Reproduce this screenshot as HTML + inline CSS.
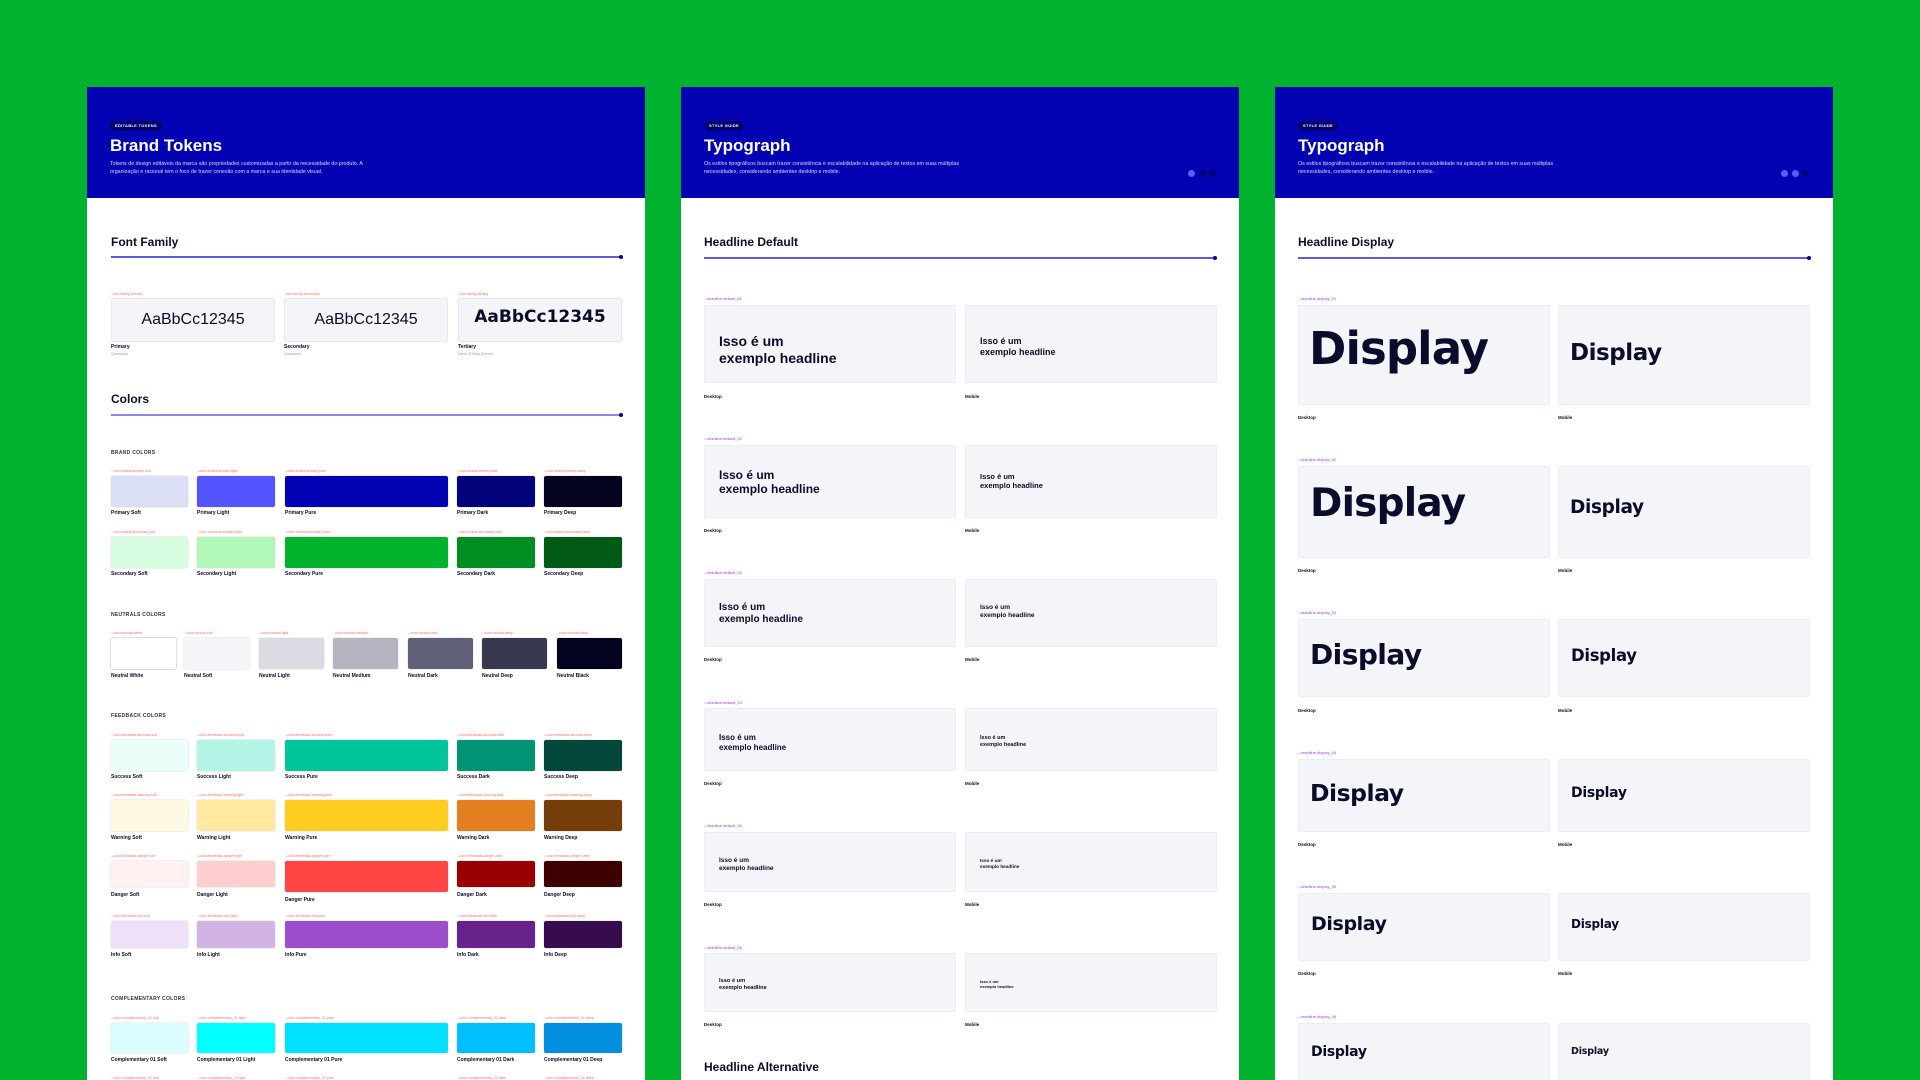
<!DOCTYPE html>
<html><head><meta charset="utf-8"><style>
*{margin:0;padding:0;box-sizing:border-box}
body{width:1920px;height:1080px;background:#00b22d;overflow:hidden;font-family:"Liberation Sans",sans-serif;color:#0b0b2b;position:relative}
.p{position:absolute;top:87px;width:558px;height:993px;background:#fff;overflow:hidden}
.p *{position:absolute;white-space:nowrap}
.hd{left:0;top:0;width:558px;height:111px;background:#0303b3}
.tag{left:23px;top:34px;height:10px;padding:0 5px;border-radius:5px;background:#00006e;color:#fff;font-size:4px;line-height:10px;font-weight:bold;letter-spacing:.3px}
.tt{left:23px;top:49px;color:#fff;font-size:17px;font-weight:bold}
.ds{left:23px;top:73px;color:#d8d8ff;font-size:5.3px;line-height:8px;white-space:normal!important;width:262px}
.h2{left:24px;font-size:12px;font-weight:bold}
.ln{left:24px;width:511px;height:1.5px;background:#5a5ae0}
.ln::after{content:"";position:absolute;right:-1px;top:-1.5px;width:4px;height:4px;border-radius:50%;background:#0000a0}
.sec{left:24px;font-size:5px;font-weight:bold;letter-spacing:.3px;color:#333}
.tk{font-size:3.5px;color:#ff6b6b}
.nm{font-size:5px;font-weight:bold}
.sw{border-radius:2px;height:31px;box-shadow:0 0 0 1px rgba(0,0,0,.06)}
.fc{top:211px;width:164px;height:44px;background:#f4f5f9;border:1px solid #e8e9ef;border-radius:2px;font-size:16px;text-align:center;line-height:42px}
.tp{font-size:4px;color:#a040e0}
.cd{background:#f4f5f9;border:1px solid #ecedf2;border-radius:2px;width:252px}
.lb{font-size:4.5px;font-weight:bold}
.dot{top:83px;width:7px;height:7px;border-radius:50%}
.hl{font-weight:bold;line-height:1.2}
.dp{font-weight:bold;font-family:"DejaVu Sans","Liberation Sans",sans-serif;letter-spacing:-.02em}
</style></head><body>

<!-- PANEL 1 -->
<div class="p" style="left:87px">
<div class="hd"></div>
<div class="tag">EDITABLE TOKENS</div>
<div class="tt">Brand Tokens</div>
<div class="ds">Tokens de design editáveis da marca são propriedades customizadas a partir da necessidade do produto. A organização e racional tem o foco de trazer conexão com a marca e sua identidade visual.</div>
<div class="h2" style="top:148px">Font Family</div>
<div class="ln" style="top:169px"></div>
<div class="tk" style="left:24px;top:205px">--font-family-primary</div>
<div class="tk" style="left:197px;top:205px">--font-family-secondary</div>
<div class="tk" style="left:371px;top:205px">--font-family-tertiary</div>
<div class="fc" style="left:24px">AaBbCc12345</div>
<div class="fc" style="left:197px">AaBbCc12345</div>
<div class="fc" style="left:371px;font-weight:bold;font-size:17px;line-height:36px;font-family:'DejaVu Sans',sans-serif">AaBbCc12345</div>
<div class="nm" style="left:24px;top:257px">Primary</div><div class="tk" style="left:24px;top:265px;color:#999">Quicksand</div>
<div class="nm" style="left:197px;top:257px">Secondary</div><div class="tk" style="left:197px;top:265px;color:#999">Quicksand</div>
<div class="nm" style="left:371px;top:257px">Tertiary</div><div class="tk" style="left:371px;top:265px;color:#999">Hand Of Sean (Demo)</div>
<div class="h2" style="top:305px">Colors</div>
<div class="ln" style="top:327px;background:#8a8ae0"></div>

<div class="sec" style="top:363px">BRAND COLORS</div>
<div class="tk" style="left:24px;top:382px">--color-brand-primary-soft</div>
<div class="tk" style="left:110px;top:382px">--color-brand-primary-light</div>
<div class="tk" style="left:198px;top:382px">--color-brand-primary-pure</div>
<div class="tk" style="left:370px;top:382px">--color-brand-primary-dark</div>
<div class="tk" style="left:457px;top:382px">--color-brand-primary-deep</div>
<div class="sw" style="left:24px;top:389px;width:77px;background:#dadff5"></div>
<div class="sw" style="left:110px;top:389px;width:78px;background:#5454ff"></div>
<div class="sw" style="left:198px;top:389px;width:163px;background:#0303b3"></div>
<div class="sw" style="left:370px;top:389px;width:78px;background:#02027a"></div>
<div class="sw" style="left:457px;top:389px;width:78px;background:#03031f"></div>
<div class="nm" style="left:24px;top:423px">Primary Soft</div>
<div class="nm" style="left:110px;top:423px">Primary Light</div>
<div class="nm" style="left:198px;top:423px">Primary Pure</div>
<div class="nm" style="left:370px;top:423px">Primary Dark</div>
<div class="nm" style="left:457px;top:423px">Primary Deep</div>

<div class="tk" style="left:24px;top:443px">--color-brand-secondary-soft</div>
<div class="tk" style="left:110px;top:443px">--color-brand-secondary-light</div>
<div class="tk" style="left:198px;top:443px">--color-brand-secondary-pure</div>
<div class="tk" style="left:370px;top:443px">--color-brand-secondary-dark</div>
<div class="tk" style="left:457px;top:443px">--color-brand-secondary-deep</div>
<div class="sw" style="left:24px;top:450px;width:77px;background:#d8fde0"></div>
<div class="sw" style="left:110px;top:450px;width:78px;background:#b0f7b8"></div>
<div class="sw" style="left:198px;top:450px;width:163px;background:#01b22c"></div>
<div class="sw" style="left:370px;top:450px;width:78px;background:#018d22"></div>
<div class="sw" style="left:457px;top:450px;width:78px;background:#025a17"></div>
<div class="nm" style="left:24px;top:484px">Secondary Soft</div>
<div class="nm" style="left:110px;top:484px">Secondary Light</div>
<div class="nm" style="left:198px;top:484px">Secondary Pure</div>
<div class="nm" style="left:370px;top:484px">Secondary Dark</div>
<div class="nm" style="left:457px;top:484px">Secondary Deep</div>

<div class="sec" style="top:525px">NEUTRALS COLORS</div>
<div class="tk" style="left:24px;top:544px">--color-neutral-white</div>
<div class="tk" style="left:97px;top:544px">--color-neutral-soft</div>
<div class="tk" style="left:172px;top:544px">--color-neutral-light</div>
<div class="tk" style="left:246px;top:544px">--color-neutral-medium</div>
<div class="tk" style="left:321px;top:544px">--color-neutral-dark</div>
<div class="tk" style="left:395px;top:544px">--color-neutral-deep</div>
<div class="tk" style="left:470px;top:544px">--color-neutral-black</div>
<div class="sw" style="left:24px;top:551px;width:65px;background:#fff;box-shadow:0 0 0 1px #ddd"></div>
<div class="sw" style="left:97px;top:551px;width:65px;background:#f4f5f9"></div>
<div class="sw" style="left:172px;top:551px;width:65px;background:#dadbe3"></div>
<div class="sw" style="left:246px;top:551px;width:65px;background:#b4b5c0"></div>
<div class="sw" style="left:321px;top:551px;width:65px;background:#5f6075"></div>
<div class="sw" style="left:395px;top:551px;width:65px;background:#38384f"></div>
<div class="sw" style="left:470px;top:551px;width:65px;background:#03031f"></div>
<div class="nm" style="left:24px;top:586px">Neutral White</div>
<div class="nm" style="left:97px;top:586px">Neutral Soft</div>
<div class="nm" style="left:172px;top:586px">Neutral Light</div>
<div class="nm" style="left:246px;top:586px">Neutral Medium</div>
<div class="nm" style="left:321px;top:586px">Neutral Dark</div>
<div class="nm" style="left:395px;top:586px">Neutral Deep</div>
<div class="nm" style="left:470px;top:586px">Neutral Black</div>

<div class="sec" style="top:626px">FEEDBACK COLORS</div>
<div class="tk" style="left:24px;top:646px">--color-feedback-success-soft</div>
<div class="tk" style="left:110px;top:646px">--color-feedback-success-light</div>
<div class="tk" style="left:198px;top:646px">--color-feedback-success-pure</div>
<div class="tk" style="left:370px;top:646px">--color-feedback-success-dark</div>
<div class="tk" style="left:457px;top:646px">--color-feedback-success-deep</div>
<div class="sw" style="left:24px;top:653px;width:77px;background:#ebfffa"></div>
<div class="sw" style="left:110px;top:653px;width:78px;background:#b3f4e6"></div>
<div class="sw" style="left:198px;top:653px;width:163px;background:#00c59b"></div>
<div class="sw" style="left:370px;top:653px;width:78px;background:#009474"></div>
<div class="sw" style="left:457px;top:653px;width:78px;background:#02473a"></div>
<div class="nm" style="left:24px;top:687px">Success Soft</div>
<div class="nm" style="left:110px;top:687px">Success Light</div>
<div class="nm" style="left:198px;top:687px">Success Pure</div>
<div class="nm" style="left:370px;top:687px">Success Dark</div>
<div class="nm" style="left:457px;top:687px">Success Deep</div>

<div class="tk" style="left:24px;top:706px">--color-feedback-warning-soft</div>
<div class="tk" style="left:110px;top:706px">--color-feedback-warning-light</div>
<div class="tk" style="left:198px;top:706px">--color-feedback-warning-pure</div>
<div class="tk" style="left:370px;top:706px">--color-feedback-warning-dark</div>
<div class="tk" style="left:457px;top:706px">--color-feedback-warning-deep</div>
<div class="sw" style="left:24px;top:713px;width:77px;background:#fff8e2"></div>
<div class="sw" style="left:110px;top:713px;width:78px;background:#ffe8a0"></div>
<div class="sw" style="left:198px;top:713px;width:163px;background:#ffcc22"></div>
<div class="sw" style="left:370px;top:713px;width:78px;background:#e37f1f"></div>
<div class="sw" style="left:457px;top:713px;width:78px;background:#743d0a"></div>
<div class="nm" style="left:24px;top:748px">Warning Soft</div>
<div class="nm" style="left:110px;top:748px">Warning Light</div>
<div class="nm" style="left:198px;top:748px">Warning Pure</div>
<div class="nm" style="left:370px;top:748px">Warning Dark</div>
<div class="nm" style="left:457px;top:748px">Warning Deep</div>

<div class="tk" style="left:24px;top:767px">--color-feedback-danger-soft</div>
<div class="tk" style="left:110px;top:767px">--color-feedback-danger-light</div>
<div class="tk" style="left:198px;top:767px">--color-feedback-danger-pure</div>
<div class="tk" style="left:370px;top:767px">--color-feedback-danger-dark</div>
<div class="tk" style="left:457px;top:767px">--color-feedback-danger-deep</div>
<div class="sw" style="left:24px;top:774px;width:77px;height:26px;background:#fff1f1"></div>
<div class="sw" style="left:110px;top:774px;width:78px;height:26px;background:#ffcfcf"></div>
<div class="sw" style="left:198px;top:774px;width:163px;height:31px;background:#ff4444"></div>
<div class="sw" style="left:370px;top:774px;width:78px;height:26px;background:#9a0003"></div>
<div class="sw" style="left:457px;top:774px;width:78px;height:26px;background:#3e0000"></div>
<div class="nm" style="left:24px;top:805px">Danger Soft</div>
<div class="nm" style="left:110px;top:805px">Danger Light</div>
<div class="nm" style="left:198px;top:810px">Danger Pure</div>
<div class="nm" style="left:370px;top:805px">Danger Dark</div>
<div class="nm" style="left:457px;top:805px">Danger Deep</div>

<div class="tk" style="left:24px;top:827px">--color-feedback-info-soft</div>
<div class="tk" style="left:110px;top:827px">--color-feedback-info-light</div>
<div class="tk" style="left:198px;top:827px">--color-feedback-info-pure</div>
<div class="tk" style="left:370px;top:827px">--color-feedback-info-dark</div>
<div class="tk" style="left:457px;top:827px">--color-feedback-info-deep</div>
<div class="sw" style="left:24px;top:834px;width:77px;height:27px;background:#eee0f8"></div>
<div class="sw" style="left:110px;top:834px;width:78px;height:27px;background:#d3b2e6"></div>
<div class="sw" style="left:198px;top:834px;width:163px;height:27px;background:#9b4dcb"></div>
<div class="sw" style="left:370px;top:834px;width:78px;height:27px;background:#67228c"></div>
<div class="sw" style="left:457px;top:834px;width:78px;height:27px;background:#370b4e"></div>
<div class="nm" style="left:24px;top:865px">Info Soft</div>
<div class="nm" style="left:110px;top:865px">Info Light</div>
<div class="nm" style="left:198px;top:865px">Info Pure</div>
<div class="nm" style="left:370px;top:865px">Info Dark</div>
<div class="nm" style="left:457px;top:865px">Info Deep</div>

<div class="sec" style="top:909px">COMPLEMENTARY COLORS</div>
<div class="tk" style="left:24px;top:929px">--color-complementary_01-soft</div>
<div class="tk" style="left:110px;top:929px">--color-complementary_01-light</div>
<div class="tk" style="left:198px;top:929px">--color-complementary_01-pure</div>
<div class="tk" style="left:370px;top:929px">--color-complementary_01-dark</div>
<div class="tk" style="left:457px;top:929px">--color-complementary_01-deep</div>
<div class="sw" style="left:24px;top:936px;width:77px;height:30px;background:#dcfdfd"></div>
<div class="sw" style="left:110px;top:936px;width:78px;height:30px;background:#00ffff"></div>
<div class="sw" style="left:198px;top:936px;width:163px;height:30px;background:#00e1ff"></div>
<div class="sw" style="left:370px;top:936px;width:78px;height:30px;background:#00bfff"></div>
<div class="sw" style="left:457px;top:936px;width:78px;height:30px;background:#008fde"></div>
<div class="nm" style="left:24px;top:970px">Complementary 01 Soft</div>
<div class="nm" style="left:110px;top:970px">Complementary 01 Light</div>
<div class="nm" style="left:198px;top:970px">Complementary 01 Pure</div>
<div class="nm" style="left:370px;top:970px">Complementary 01 Dark</div>
<div class="nm" style="left:457px;top:970px">Complementary 01 Deep</div>
<div class="tk" style="left:24px;top:989px">--color-complementary_02-soft</div>
<div class="tk" style="left:110px;top:989px">--color-complementary_02-light</div>
<div class="tk" style="left:198px;top:989px">--color-complementary_02-pure</div>
<div class="tk" style="left:370px;top:989px">--color-complementary_02-dark</div>
<div class="tk" style="left:457px;top:989px">--color-complementary_02-deep</div>
</div>

<!-- PANEL 2 -->
<div class="p" style="left:681px">
<div class="hd"></div>
<div class="tag">STYLE GUIDE</div>
<div class="tt">Typograph</div>
<div class="ds">Os estilos tipográficos buscam trazer consistência e escalabilidade na aplicação de textos em suas múltiplas necessidades, considerando ambientes desktop e mobile.</div>
<div class="dot" style="left:507px;background:#5a5aff"></div>
<div class="dot" style="left:518px;background:#00007a"></div>
<div class="dot" style="left:528px;background:#00007a"></div>
<div class="h2" style="top:148px;left:23px">Headline Default</div>
<div class="ln" style="top:170px;width:512px;left:23px"></div>

<div class="tp" style="left:23px;top:209px">--headline-default_01</div>
<div class="cd hl" style="left:23px;top:218px;height:78px;padding:27px 0 0 14px;font-size:14px">Isso é um<br>exemplo headline</div>
<div class="cd hl" style="left:284px;top:218px;height:78px;padding:30px 0 0 14px;font-size:9px">Isso é um<br>exemplo headline</div>
<div class="lb" style="left:23px;top:307px">Desktop</div><div class="lb" style="left:284px;top:307px">Mobile</div>

<div class="tp" style="left:23px;top:349px">--headline-default_02</div>
<div class="cd hl" style="left:23px;top:358px;height:73px;padding:22px 0 0 14px;font-size:12px">Isso é um<br>exemplo headline</div>
<div class="cd hl" style="left:284px;top:358px;height:73px;padding:26px 0 0 14px;font-size:7.5px">Isso é um<br>exemplo headline</div>
<div class="lb" style="left:23px;top:441px">Desktop</div><div class="lb" style="left:284px;top:441px">Mobile</div>

<div class="tp" style="left:23px;top:483px">--headline-default_03</div>
<div class="cd hl" style="left:23px;top:492px;height:68px;padding:22px 0 0 14px;font-size:10px">Isso é um<br>exemplo headline</div>
<div class="cd hl" style="left:284px;top:492px;height:68px;padding:24px 0 0 14px;font-size:6.5px">Isso é um<br>exemplo headline</div>
<div class="lb" style="left:23px;top:570px">Desktop</div><div class="lb" style="left:284px;top:570px">Mobile</div>

<div class="tp" style="left:23px;top:613px">--headline-default_04</div>
<div class="cd hl" style="left:23px;top:621px;height:63px;padding:24px 0 0 14px;font-size:8px">Isso é um<br>exemplo headline</div>
<div class="cd hl" style="left:284px;top:621px;height:63px;padding:26px 0 0 14px;font-size:5.5px">Isso é um<br>exemplo headline</div>
<div class="lb" style="left:23px;top:694px">Desktop</div><div class="lb" style="left:284px;top:694px">Mobile</div>

<div class="tp" style="left:23px;top:736px">--headline-default_05</div>
<div class="cd hl" style="left:23px;top:745px;height:60px;padding:24px 0 0 14px;font-size:6.5px">Isso é um<br>exemplo headline</div>
<div class="cd hl" style="left:284px;top:745px;height:60px;padding:25px 0 0 14px;font-size:4.7px">Isso é um<br>exemplo headline</div>
<div class="lb" style="left:23px;top:815px">Desktop</div><div class="lb" style="left:284px;top:815px">Mobile</div>

<div class="tp" style="left:23px;top:858px">--headline-default_06</div>
<div class="cd hl" style="left:23px;top:866px;height:59px;padding:24px 0 0 14px;font-size:5.7px">Isso é um<br>exemplo headline</div>
<div class="cd hl" style="left:284px;top:866px;height:59px;padding:26px 0 0 14px;font-size:4px">Isso é um<br>exemplo headline</div>
<div class="lb" style="left:23px;top:935px">Desktop</div><div class="lb" style="left:284px;top:935px">Mobile</div>
<div class="h2" style="left:23px;top:973px">Headline Alternative</div>
</div>

<!-- PANEL 3 -->
<div class="p" style="left:1275px">
<div class="hd"></div>
<div class="tag">STYLE GUIDE</div>
<div class="tt">Typograph</div>
<div class="ds">Os estilos tipográficos buscam trazer consistência e escalabilidade na aplicação de textos em suas múltiplas necessidades, considerando ambientes desktop e mobile.</div>
<div class="dot" style="left:506px;background:#5a5aff"></div>
<div class="dot" style="left:517px;background:#5a5aff"></div>
<div class="dot" style="left:527px;background:#00007a"></div>
<div class="h2" style="left:23px;top:148px">Headline Display</div>
<div class="ln" style="top:170px;width:512px;left:23px"></div>

<div class="tp" style="left:23px;top:209px">--headline-display_01</div>
<div class="cd dp" style="left:23px;top:218px;height:100px;padding:16px 0 0 10px;font-size:45px">Display</div>
<div class="cd dp" style="left:283px;top:218px;height:100px;padding:34px 0 0 11px;font-size:23px">Display</div>
<div class="lb" style="left:23px;top:328px">Desktop</div><div class="lb" style="left:283px;top:328px">Mobile</div>

<div class="tp" style="left:23px;top:370px">--headline-display_02</div>
<div class="cd dp" style="left:23px;top:379px;height:92px;padding:14px 0 0 11px;font-size:39px">Display</div>
<div class="cd dp" style="left:283px;top:379px;height:92px;padding:30px 0 0 11px;font-size:18.5px">Display</div>
<div class="lb" style="left:23px;top:481px">Desktop</div><div class="lb" style="left:283px;top:481px">Mobile</div>

<div class="tp" style="left:23px;top:523px">--headline-display_03</div>
<div class="cd dp" style="left:23px;top:532px;height:78px;padding:18px 0 0 11px;font-size:28px">Display</div>
<div class="cd dp" style="left:283px;top:532px;height:78px;padding:26px 0 0 12px;font-size:16.5px">Display</div>
<div class="lb" style="left:23px;top:621px">Desktop</div><div class="lb" style="left:283px;top:621px">Mobile</div>

<div class="tp" style="left:23px;top:663px">--headline-display_04</div>
<div class="cd dp" style="left:23px;top:672px;height:73px;padding:19px 0 0 11px;font-size:23.5px">Display</div>
<div class="cd dp" style="left:283px;top:672px;height:73px;padding:25px 0 0 12px;font-size:14px">Display</div>
<div class="lb" style="left:23px;top:755px">Desktop</div><div class="lb" style="left:283px;top:755px">Mobile</div>

<div class="tp" style="left:23px;top:797px">--headline-display_05</div>
<div class="cd dp" style="left:23px;top:806px;height:68px;padding:19px 0 0 12px;font-size:19px">Display</div>
<div class="cd dp" style="left:283px;top:806px;height:68px;padding:23px 0 0 12px;font-size:12px">Display</div>
<div class="lb" style="left:23px;top:884px">Desktop</div><div class="lb" style="left:283px;top:884px">Mobile</div>

<div class="tp" style="left:23px;top:927px">--headline-display_06</div>
<div class="cd dp" style="left:23px;top:936px;height:80px;padding:20px 0 0 12px;font-size:14px">Display</div>
<div class="cd dp" style="left:283px;top:936px;height:80px;padding:22px 0 0 12px;font-size:9.5px">Display</div>
</div>
</body></html>
